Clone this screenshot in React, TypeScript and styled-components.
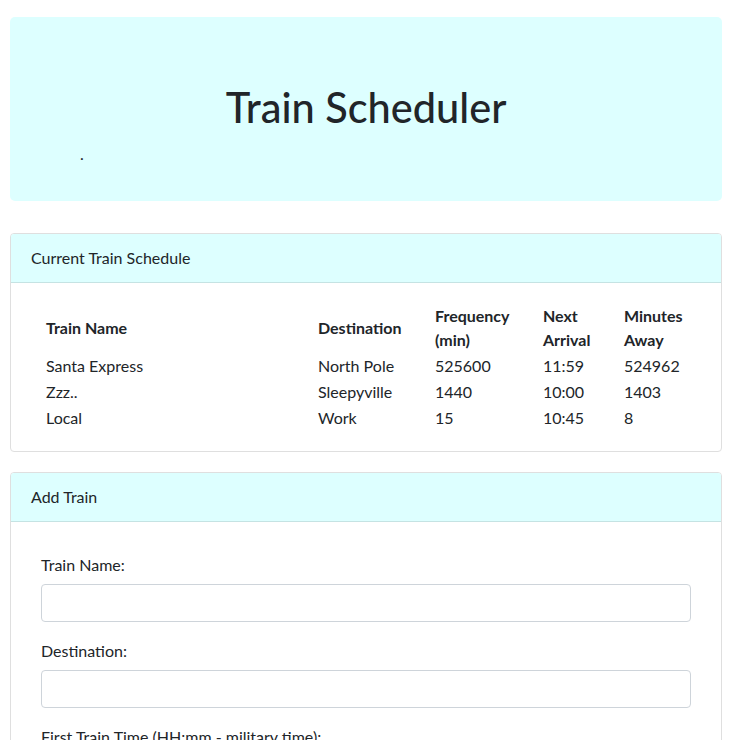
import React from "react";
import styled, { createGlobalStyle } from "styled-components";

const Global = createGlobalStyle`
  html, body { margin: 0; padding: 0; background: #fff; }
  body {
    font-family: "Segoe UI", Lato, "Noto Sans", "Liberation Sans", sans-serif;
    font-size: 16px;
    line-height: 1.5;
    color: #212529;
  }
  * { box-sizing: border-box; }
`;

const Page = styled.div`
  width: 712px;
  margin: 17px 0 0 10px;
  display: flex;
  flex-direction: column;
`;

const Jumbo = styled.div`
  background: #ddffff;
  border-radius: 5px;
  height: 184px;
  padding: 66px 32px 0;
  margin-bottom: 32px;
`;

const Title = styled.h1`
  margin: 0;
  font-size: 41.5px;
  font-weight: 500;
  line-height: 48px;
  text-align: center;
`;

const Dot = styled.p`
  margin: 11px 0 0 38px;
  line-height: 24px;
  font-size: 16px;
`;

const Card = styled.section`
  border: 1px solid #dfdfdf;
  border-radius: 4px;
  margin-bottom: 20px;
  overflow: hidden;
`;

const CardHeader = styled.div`
  background: #ddffff;
  border-bottom: 1px solid #c5e3e3;
  padding: 12px 20px;
  line-height: 24px;
`;

const CardBody = styled.div<{ $px: number; $pt: number }>`
  padding: ${(p) => p.$pt}px ${(p) => p.$px}px 20px;
`;

const Table = styled.table`
  border-collapse: collapse;
  table-layout: fixed;
  width: 662px;
  margin-left: -1px;
`;

const Th = styled.th<{ $w?: number }>`
  text-align: left;
  font-weight: 700;
  padding: 0 1px 1px;
  line-height: 24px;
  vertical-align: middle;
  ${(p) => (p.$w ? `width: ${p.$w}px;` : "")}
`;

const Td = styled.td`
  padding: 1px;
  line-height: 24px;
`;

const FormGroup = styled.div`
  margin-bottom: 17px;
  display: flex;
  flex-direction: column;
`;

const Label = styled.label`
  line-height: 24px;
  margin-bottom: 7px;
`;

const Input = styled.input`
  height: 38px;
  border: 1px solid #ced4da;
  border-radius: 4px;
  padding: 6px 12px;
  font: inherit;
  width: 100%;
`;

const rows = [
  ["Santa Express", "North Pole", "525600", "11:59", "524962"],
  ["Zzz..", "Sleepyville", "1440", "10:00", "1403"],
  ["Local", "Work", "15", "10:45", "8"],
];

export default function App() {
  return (
    <>
      <Global />
      <Page>
        <Jumbo>
          <Title>Train Scheduler</Title>
          <Dot>.</Dot>
        </Jumbo>
        <Card>
          <CardHeader>Current Train Schedule</CardHeader>
          <CardBody $px={35} $pt={21}>
            <Table>
              <thead>
                <tr>
                  <Th $w={272}>Train Name</Th>
                  <Th $w={117}>Destination</Th>
                  <Th $w={108}>
                    Frequency
                    <br />
                    (min)
                  </Th>
                  <Th $w={81}>
                    Next
                    <br />
                    Arrival
                  </Th>
                  <Th>
                    Minutes
                    <br />
                    Away
                  </Th>
                </tr>
              </thead>
              <tbody>
                {rows.map((r) => (
                  <tr key={r[0]}>
                    {r.map((c, i) => (
                      <Td key={i}>{c}</Td>
                    ))}
                  </tr>
                ))}
              </tbody>
            </Table>
          </CardBody>
        </Card>
        <Card>
          <CardHeader>Add Train</CardHeader>
          <CardBody $px={30} $pt={31}>
            <FormGroup>
              <Label>Train Name:</Label>
              <Input type="text" />
            </FormGroup>
            <FormGroup>
              <Label>Destination:</Label>
              <Input type="text" />
            </FormGroup>
            <FormGroup>
              <Label>First Train Time (HH:mm - military time):</Label>
              <Input type="text" />
            </FormGroup>
            <FormGroup>
              <Label>Frequency (min):</Label>
              <Input type="text" />
            </FormGroup>
          </CardBody>
        </Card>
      </Page>
    </>
  );
}
